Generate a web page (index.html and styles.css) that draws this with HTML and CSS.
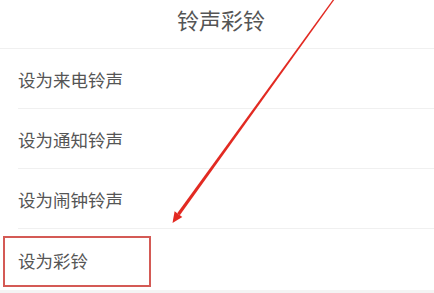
FILE: index.html
```html
<!DOCTYPE html>
<html lang="zh">
<head>
<meta charset="utf-8">
<link rel="stylesheet" href="styles.css">
</head>
<body>
<div class="page">
  <div class="header">铃声彩铃</div>
  <div class="list">
    <div class="item">设为来电铃声</div>
    <div class="item">设为通知铃声</div>
    <div class="item">设为闹钟铃声</div>
    <div class="item last">设为彩铃</div>
  </div>
  <div class="footer"></div>
  <div class="highlight"></div>
  <svg class="arrow" width="434" height="293" viewBox="0 0 434 293">
    <polygon points="332.6,0 334.2,0 179.8,215.2 177.2,213.2" fill="#e22a22"/>
    <polygon points="172.5,223 182.3,216.9 174.6,211.3" fill="#e22a22"/>
  </svg>
</div>
</body>
</html>
```
FILE: styles.css
```css
html, body {
  margin: 0;
  padding: 0;
  background: #ffffff;
}
.page {
  position: relative;
  width: 434px;
  height: 293px;
  overflow: hidden;
  font-family: "Noto Sans CJK SC", "Noto Sans", sans-serif;
  color: #555555;
}
.header {
  box-sizing: border-box;
  height: 49px;
  border-bottom: 1px solid #f0f0f0;
  display: flex;
  align-items: center;
  justify-content: center;
  padding-left: 8px;
  padding-bottom: 10px;
  font-size: 22px;
  color: #555555;
}
.list {
  display: flex;
  flex-direction: column;
}
.item {
  box-sizing: border-box;
  height: 60px;
  margin-left: 18px;
  border-bottom: 1px solid #f0f0f0;
  display: flex;
  align-items: center;
  padding-top: 2px;
  font-size: 17.5px;
  color: #555555;
}
.item.last {
  height: 61px;
  border-bottom: none;
}
.footer {
  height: 3px;
  background: #f4f4f4;
}
.highlight {
  position: absolute;
  left: 3px;
  top: 236px;
  width: 148px;
  height: 51px;
  box-sizing: border-box;
  border: 2px solid #d45a55;
}
.arrow {
  position: absolute;
  left: 0;
  top: 0;
}
```
